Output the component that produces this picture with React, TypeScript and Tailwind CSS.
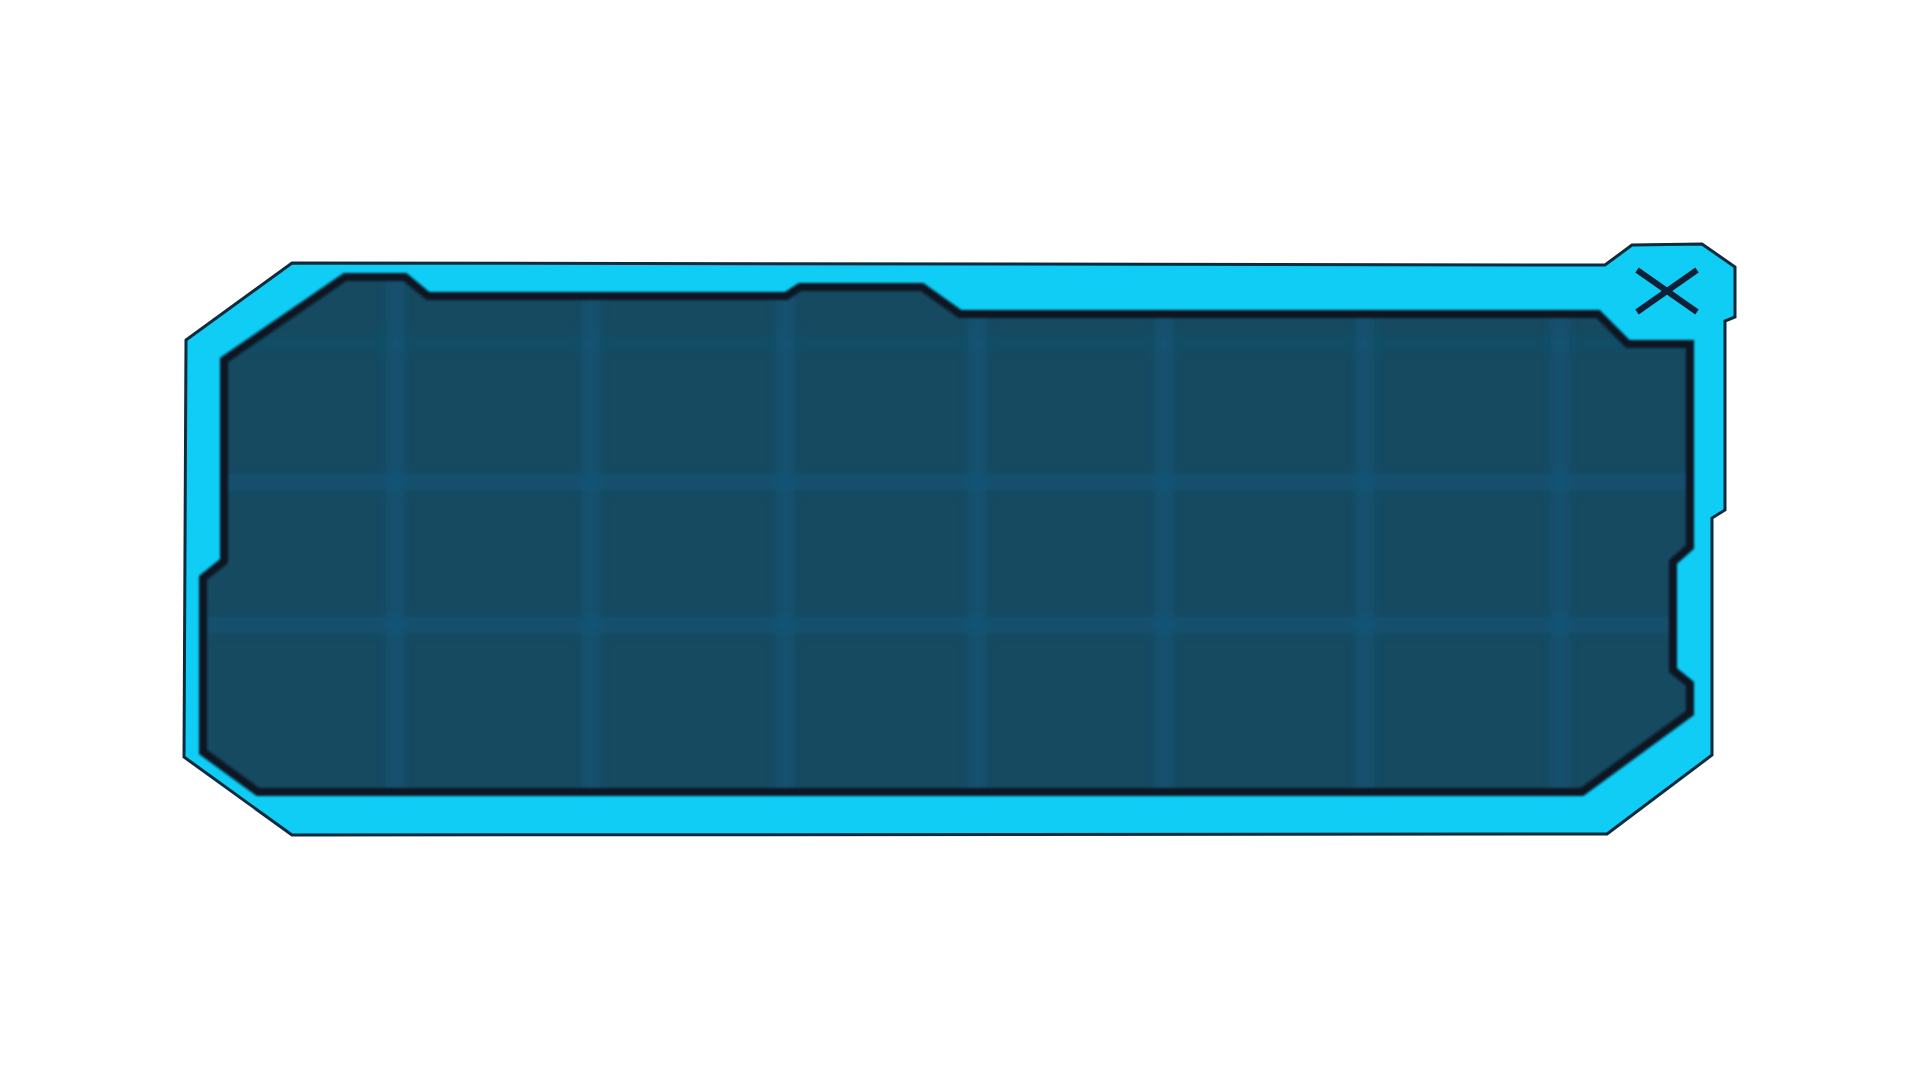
import React from "react";

const OUTER =
  "292,263 1605,265 1632,245 1702,244 1735,267 1735,317 1725,321 1725,510 1712,518 1712,755 1607,834 292,835 184,757 186,340";
const INNER =
  "224,360 345,277 405,277 428,296 786,296 800,287 922,287 960,314 1598,314 1628,344 1690,344 1690,547 1673,562 1673,670 1690,684 1690,713 1582,792 258,792 203,752 203,578 224,561";

const VLINES = [395, 591, 785, 977, 1164, 1365, 1560];
const HLINES = [343, 482, 625];

export default function App() {
  return (
    <div className="w-full h-[1080px] bg-white flex items-center justify-center overflow-hidden">
      <div className="relative w-[1920px] h-[1080px]">
        <svg width="1920" height="1080" viewBox="0 0 1920 1080" className="block">
          <defs>
            <clipPath id="innerClip">
              <polygon points={INNER} />
            </clipPath>
            <filter id="soft" x="-10%" y="-10%" width="120%" height="120%">
              <feGaussianBlur stdDeviation="4" />
            </filter>
            <filter id="edge" x="-5%" y="-5%" width="110%" height="110%">
              <feGaussianBlur stdDeviation="0.9" />
            </filter>
          </defs>
          <polygon points={OUTER} fill="#0fcdf5" stroke="#0b2a3c" strokeWidth="3" strokeLinejoin="miter" />
          <polygon points={INNER} fill="#164a61" />
          <g clipPath="url(#innerClip)" filter="url(#soft)">
            {VLINES.map((x) => (
              <rect key={"v" + x} x={x - 9} y={250} width={18} height={600} fill="#13587c" opacity={0.55} />
            ))}
            {HLINES.map((y, i) => (
              <rect
                key={"h" + y}
                x={150}
                y={y - 8}
                width={1600}
                height={16}
                fill="#13587c"
                opacity={i === 0 ? 0.2 : 0.5}
              />
            ))}
          </g>
          <polygon
            points={INNER}
            fill="none"
            stroke="#0a1624"
            strokeWidth="8"
            strokeLinejoin="miter"
            filter="url(#edge)"
          />
        </svg>
        <button
          type="button"
          aria-label="Close"
          className="absolute left-[1634px] top-[267px] w-[66px] h-[48px] flex items-center justify-center bg-transparent"
        >
          <svg width="66" height="48" viewBox="0 0 66 48">
            <line x1="3" y1="3" x2="63" y2="45" stroke="#0e2038" strokeWidth="6" strokeLinecap="butt" />
            <line x1="63" y1="3" x2="3" y2="45" stroke="#0e2038" strokeWidth="6" strokeLinecap="butt" />
          </svg>
        </button>
      </div>
    </div>
  );
}
